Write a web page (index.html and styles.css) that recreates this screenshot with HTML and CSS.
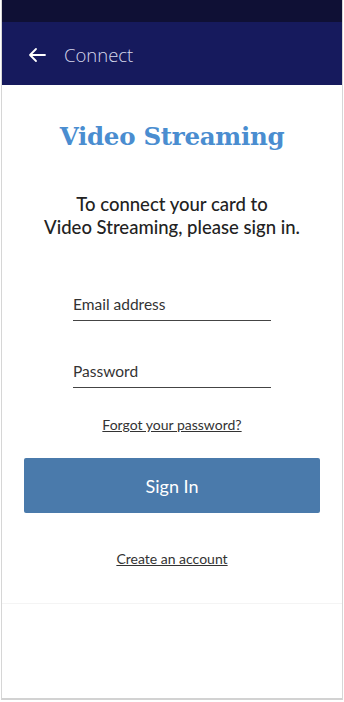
FILE: index.html
```html
<!DOCTYPE html>
<html>
    <head>
        <meta charset="UTF-8">
        <title>Connect</title>
        <link rel="stylesheet" href="styles.css">
    </head>
    <body>
        <div class="phone">
            <div class="status"></div>
            <div class="topbar">
                <svg class="back" width="18" height="16" viewBox="0 0 18 16">
                    <path d="M17 8H2M8 2L2 8l6 6" fill="none" stroke="#fff" stroke-width="1.8" stroke-linecap="round" stroke-linejoin="round"/>
                </svg>
                <span class="title">Connect</span>
            </div>
            <div class="main">
                <h1 class="brand">Video Streaming</h1>
                <p class="intro">To connect your card to<br>Video Streaming, please sign in.</p>
                <div class="field"><span>Email address</span></div>
                <div class="field"><span>Password</span></div>
                <a class="link forgot">Forgot your password?</a>
                <button class="signin">Sign In</button>
                <a class="link create">Create an account</a>
            </div>
            <div class="foot"></div>
        </div>
    </body>
</html>
```
FILE: styles.css
```css
html, body{
    margin: 0;
    padding: 0;
    background: #fff;
}
body{
    font-family: Lato, "Noto Sans", sans-serif;
}
.phone{
    width: 340px;
    height: 698px;
    margin-left: 1px;
    border: 1px solid #d6d6d6;
    border-top: none;
    border-bottom: 2px solid #d2d2d2;
    display: flex;
    flex-direction: column;
    box-sizing: content-box;
}
.status{
    height: 22px;
    background: #0f1035;
}
.topbar{
    height: 63px;
    background: #161a5d;
    display: flex;
    align-items: center;
    padding-left: 26px;
}
.back{
    margin-top: 3px;
}
.title{
    color: #d6d8ec;
    font-family: "Open Sans", sans-serif;
    font-weight: 300;
    font-size: 18.5px;
    margin-left: 18px;
    margin-top: 2px;
}
.main{
    flex: 1;
    display: flex;
    flex-direction: column;
    align-items: center;
    border-bottom: 1px solid #f4f4f4;
}
.brand{
    margin: 37px 0 0;
    font-family: "DejaVu Serif", serif;
    font-weight: bold;
    font-size: 24.5px;
    color: #4a8dd0;
    letter-spacing: -0.3px;
}
.intro{
    margin: 42px 0 0;
    text-align: center;
    font-size: 18.5px;
    line-height: 23px;
    color: #222;
    font-weight: 500;
}
.field{
    width: 198px;
    border-bottom: 1px solid #444;
    margin-top: 56px;
    padding-bottom: 7px;
    font-size: 15.5px;
    color: #333;
}
.field + .field{
    margin-top: 41px;
}
.link{
    color: #333;
    text-decoration: underline;
    font-size: 14px;
}
.forgot{
    margin-top: 28px;
}
.signin{
    margin-top: 25px;
    width: 296px;
    height: 55px;
    border: none;
    border-radius: 2px;
    background: #4a7aab;
    color: #fff;
    font-family: Lato, sans-serif;
    font-size: 18px;
}
.create{
    margin-top: 37px;
}
.foot{
    height: 94px;
}
```
